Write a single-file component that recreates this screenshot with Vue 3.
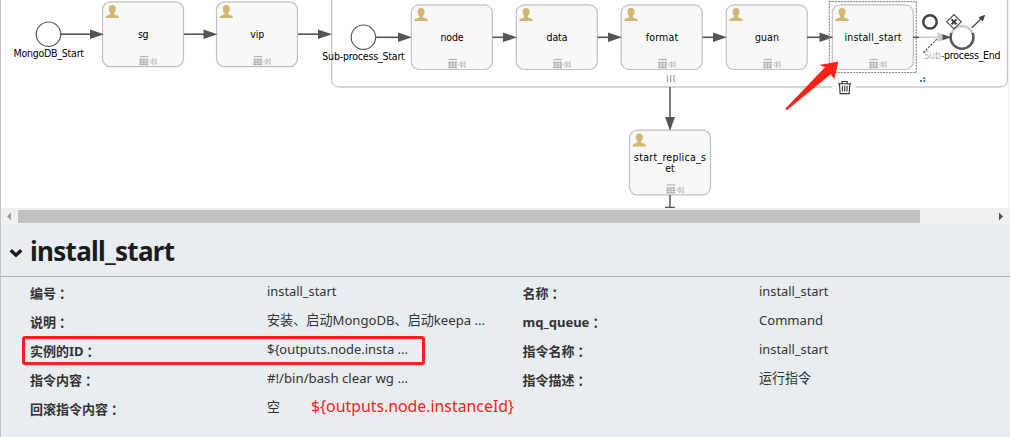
<script setup>
const tasks = [
  { x: 102.5, y: 1.9, label: 'sg', w: 10.5 },
  { x: 216.5, y: 1.9, label: 'vip', w: 14 },
  { x: 411.3, y: 4.8, label: 'node', w: 23 },
  { x: 516.3, y: 4.8, label: 'data', w: 21 },
  { x: 621.2, y: 4.8, label: 'format', w: 32.5 },
  { x: 726.2, y: 4.8, label: 'guan', w: 24 },
  { x: 832.3, y: 4.8, label: 'install_start', w: 57 },
  { x: 629.5, y: 130.2, label: '', w: 0 }
]
const flows = [
  { from: 61, to: 104, y: 34.2 },
  { from: 184, to: 217.5, y: 34.2 },
  { from: 298, to: 332, y: 34.2 },
  { from: 376, to: 412, y: 37.3 },
  { from: 492.5, to: 517, y: 37.3 },
  { from: 597.5, to: 622, y: 37.3 },
  { from: 702.5, to: 727, y: 37.3 },
  { from: 807, to: 833.5, y: 37.3 },
  { from: 913, to: 951.5, y: 37.3 }
]
const rows = [
  ['编号', 'install_start', 69.5, '名称', 'install_start', 69.5],
  ['说明', '安装、启动MongoDB、启动keepa ...', 218, 'mq_queue', 'Command', 64],
  ['实例的ID', '${outputs.node.insta ...', 141, '指令名称', 'install_start', 69.5],
  ['指令内容', '#!/bin/bash clear wg ...', 141, '指令描述', '运行指令', 52],
  ['回滚指令内容', '空', 13, '', '', 0]
]
</script>

<template>
  <div class="page">
    <svg class="canvas" width="1010" height="208" viewBox="0 0 1010 208">
      <defs>
        <g id="person">
          <path d="M6.8 0C4.5 0 3.3 1.5 3.3 3.7C3.3 5.5 4 7 5 7.9V9.2L1.2 10.7Q0 11.3 0 13H13.6Q13.6 11.3 12.4 10.7L8.6 9.2V7.9C9.6 7 10.3 5.5 10.3 3.7C10.3 1.5 9.1 0 6.8 0Z" fill="#d2b773" />
        </g>
        <g id="markers" fill="none" stroke="#b3b3b3">
          <path d="M1 .5H9.5" stroke-width="1.2" />
          <path d="M.3 3.6H9.5M.3 6H9.5M.3 8.3H9.5M2 2.5V9.4M5 2.5V9.4M8 2.5V9.4" stroke-width="1.2" />
          <path d="M14 2.5L11 5.5L14 8.5ZM17.3 2.5L14.3 5.5L17.3 8.5Z" stroke-width=".9" />
        </g>
      </defs>
      <path d="M331.7 0V79Q331.7 87 339.7 87H999.5Q1007.5 87 1007.5 79V0" fill="none" stroke="#c6c6c6" stroke-width="1.3" />
      <path d="M1008.5 0V208" stroke="#eee" />

      <g v-for="t in tasks" :key="t.x">
        <rect :x="t.x" :y="t.y" width="81" height="64.7" rx="8" fill="#f8f8f8" stroke="#c0c0c0" stroke-width="1.2" />
        <use href="#person" :x="t.x + 3" :y="t.y + 3.2" />
        <use href="#markers" :x="t.x + 36.4" :y="t.y + 54.2" />
        <text v-if="t.label" :x="t.x + 40.7" :y="t.y + 36.3" :textLength="t.w" text-anchor="middle">{{ t.label }}</text>
      </g>
      <text x="670" y="161.3" text-anchor="middle" textLength="72">start_replica_s</text>
      <text x="670" y="171.5" text-anchor="middle" textLength="9.5">et</text>

      <g fill="#fff" stroke="#585858" stroke-width="1.2">
        <circle cx="48.5" cy="34.2" r="12.2" />
        <circle cx="363.4" cy="37.2" r="12.2" />
        <circle cx="962" cy="37.4" r="11.4" stroke-width="2.5" />
      </g>
      <g v-for="f in flows" :key="f.from">
        <path :d="`M${f.from} ${f.y}H${f.to - 12}`" stroke="#555" stroke-width="1.6" />
        <path :d="`M${f.to} ${f.y}l-14 -4.8v9.6z`" fill="#555" />
      </g>
      <path d="M670 87V119M670 195V208M665 207.5H675" fill="none" stroke="#555" stroke-width="1.5" />
      <path d="M670 131l-4.9 -14h9.8z" fill="#555" />
      <path d="M667.5 75V82.5M670.7 75V82.5M674 75V82.5" stroke="#aaa" stroke-width="1.3" />

      <text x="13.5" y="57.3" textLength="70.5">MongoDB_Start</text>
      <text x="322.3" y="60.3" textLength="82.5">Sub-process_Start</text>
      <text x="923.6" y="59.3" textLength="77">Sub-process_End</text>

      <rect x="829.3" y="1.7" width="87" height="70.8" fill="none" stroke="#8a8a8a" stroke-width="1.2" stroke-dasharray="2 1" />
      <g fill="#fff" fill-opacity=".7">
        <rect x="919" y="10" width="24" height="23" />
        <rect x="943" y="10" width="24" height="23" />
        <rect x="967" y="10" width="24" height="23" />
        <rect x="919" y="33" width="23.5" height="26" />
        <rect x="832" y="76" width="24" height="24" fill-opacity=".9" />
      </g>
      <circle cx="930" cy="21.9" r="6.7" fill="none" stroke="#444" stroke-width="2.5" />
      <path d="M954 14.6L961.2 21.8L954 29L946.8 21.8Z" fill="#fff" stroke="#444" stroke-width="1.1" />
      <path d="M951.5 19.3L956.5 24.3M956.5 19.3L951.5 24.3" stroke="#333" stroke-width="1.9" />
      <path d="M971.8 27.8L981.5 18.5" stroke="#444" stroke-width="1.2" />
      <path d="M985.3 14.8L982.8 21.5L978.4 17.2Z" fill="#444" />
      <path d="M923.3 52.7L937.5 38.6" stroke="#444" stroke-width="1.1" stroke-dasharray="2.2 1.2" />
      <path d="M923.2 77.2h2v2h-2zM920 80h2v2h-2zM923.2 80h2v2h-2z" fill="#4a7db8" />
      <g fill="none" stroke="#333" stroke-width="1.1">
        <path d="M838 83.7H851M842 83.2V81.5H847.2V83.2M839.5 84L840.1 93.6H849.2L849.8 84M842.4 85.8V91.6M844.7 85.8V91.6M847 85.8V91.6" />
      </g>
      <path d="M838.4 61.5L819.3 65L825 67.2L785.5 108.6Q785.6 110.3 787.3 109.8L830.7 74.3L834.3 79Z" fill="#ff2015" />
    </svg>

    <div class="scrollbar">
      <svg width="17" height="17" viewBox="0 0 17 17"><path d="M10 4.5V12.5L6 8.5Z" fill="#9c9c9c" /></svg>
      <div class="thumb"></div>
      <svg width="17" height="17" viewBox="0 0 17 17"><path d="M7 4.5V12.5L11 8.5Z" fill="#4d4d4d" /></svg>
    </div>

    <section class="panel">
      <header>
        <svg class="chevron" width="14" height="10" viewBox="0 0 14 10"><path d="M1.7 2.3L7 7.2L12.3 2.3" fill="none" stroke="#1c1c1c" stroke-width="3.4" /></svg>
        <svg class="title" width="150" height="40"><text x="0" y="26" textLength="145">install_start</text></svg>
      </header>
      <div class="details">
        <div v-for="(r, i) in rows" :key="i" class="row" :class="{ marked: i === 2 }">
          <b>{{ r[0] }}<i>：</i></b>
          <span><svg width="230" height="24"><text x="0" y="16.5" :textLength="r[2]" lengthAdjust="spacingAndGlyphs">{{ r[1] }}</text></svg></span>
          <b v-if="r[3]">{{ r[3] }}<i>：</i></b>
          <span v-if="r[3]"><svg width="230" height="24"><text x="0" y="16.5" :textLength="r[5]" lengthAdjust="spacingAndGlyphs">{{ r[4] }}</text></svg></span>
        </div>
        <svg class="note" width="210" height="32"><text x="0" y="20" textLength="203" lengthAdjust="spacingAndGlyphs">${outputs.node.instanceId}</text></svg>
      </div>
    </section>
  </div>
</template>

<style>
body { overflow: hidden; }
</style>

<style scoped>
.page {
  box-sizing: border-box;
  width: 1010px;
  height: 437px;
  background: #fff;
  box-shadow: inset 1px 0 #bfc4ca;
  font-family: "Noto Sans", "Noto Sans CJK SC", sans-serif;
  color: #333;
}
svg { display: block; }
.canvas text { font-family: "DejaVu Sans Condensed", "DejaVu Sans", sans-serif; font-size: 10.5px; fill: #000; }
.scrollbar { display: flex; align-items: center; height: 17px; margin-left: 1px; background: #f0f0f0; }
.thumb { width: 902px; height: 13px; margin-right: 72px; background: #c1c1c1; }
.panel { height: 212px; margin-left: 1px; background: #e8edf1; }
header { display: flex; box-sizing: border-box; height: 52px; padding-left: 8px; border-bottom: 1px solid #a5acb6; }
.chevron { margin-top: 23px; }
.title { margin: 10px 0 0 7px; overflow: visible; }
.title text { font-size: 26px; font-weight: 700; fill: #1c1c1c; }
.details { position: relative; padding-top: 1px; }
.row { display: grid; grid-template-columns: 236.5px 256px 236.5px 1fr; height: 29px; padding-left: 29px; font-size: 13px; line-height: 29px; white-space: nowrap; }
.row b { font-weight: 700; padding-top: 1px; height: 28px; line-height: 28px; }
.row i { font-style: normal; padding-left: 3px; }
.row text { font-size: 13.3px; fill: #333; }
.row span { padding-top: 1px; }
.marked::after { content: ""; position: absolute; left: 21px; top: 59px; width: 397px; height: 23px; border: 3px solid #ff2015; border-radius: 3px; }
.note { position: absolute; left: 310px; top: 115px; overflow: visible; }
.note text { font-size: 16.5px; fill: #ff2015; }
</style>
